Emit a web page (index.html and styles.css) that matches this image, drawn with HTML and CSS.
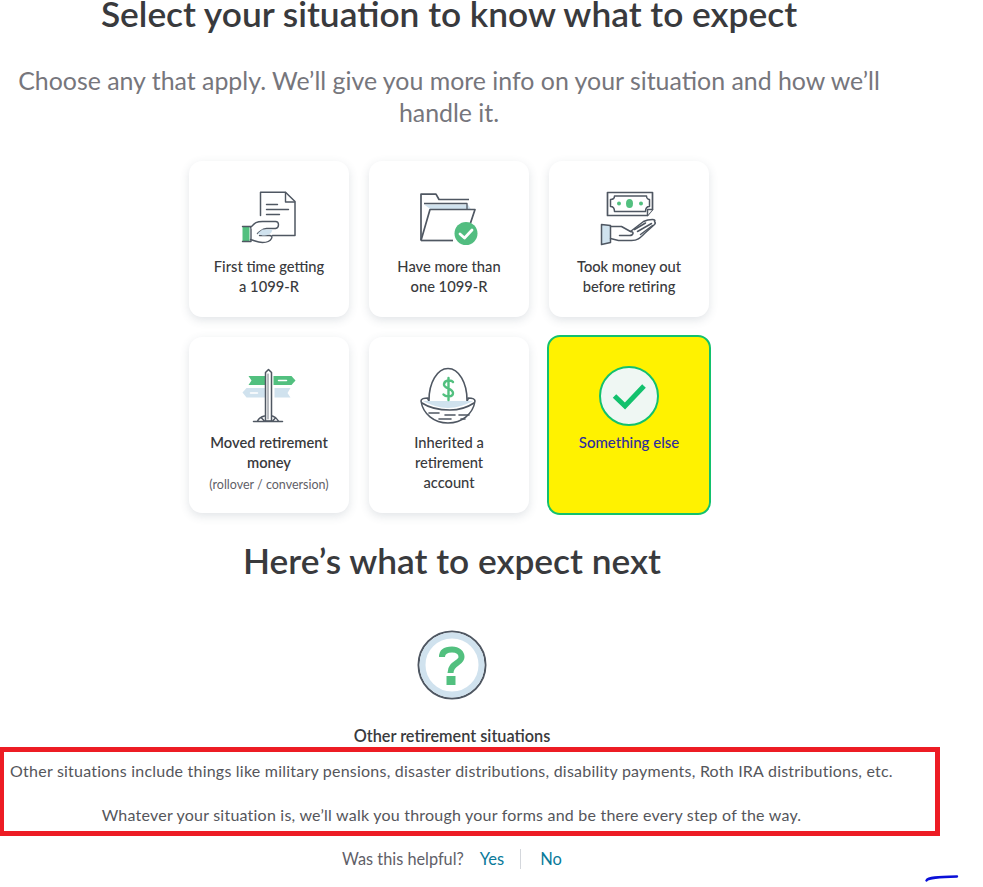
FILE: index.html
```html
<!DOCTYPE html>
<html lang="en">
<head>
<meta charset="utf-8">
<title>Select your situation</title>
<link rel="stylesheet" href="styles.css">
</head>
<body>
<main class="page">
  <section class="top">
    <h1 class="title">Select your situation to know what to expect</h1>
    <p class="subtitle">Choose any that apply. We’ll give you more info on your situation and how we’ll handle it.</p>
    <div class="grid">
      <div class="row row-one">
        <div class="card">
          <svg class="icon" viewBox="-3.500 -0.500 60 56" width="60" height="56" fill="none" stroke="#4f5762" stroke-width="1.4" stroke-linejoin="round" stroke-linecap="round">
            <path d="M18 24V0.700H43L52.500 10V44H30" stroke-width="1.500"/>
            <path d="M43 1V10.500H52"/>
            <path d="M24 13H35M24 18H46M24 23H37"/>
            <path d="M0 35H7V50H0z" fill="#52c07f" stroke="none"/>
            <path d="M0 35H8.500V50H0" />
            <path d="M8 36C12 32 13 30 20 30H33C37 30 37 36 33 37H24C20 37 18 40 15 42" fill="#fff"/>
            <path d="M8 48C12 49 15 51 20 51C25 51 28 49 29 47C30 45 29 44 27 44H17" fill="#fff"/>
            <path d="M20 38H30C29 42 26 44 20 44L15 42z" fill="#d0e2ee" stroke="none"/>
          </svg>
          <div class="label">First time getting<br>a 1099-R</div>
        </div>
        <div class="card">
          <svg class="icon" viewBox="0 -2.500 60 56" width="60" height="56" fill="none" stroke="#4f5762" stroke-width="1.7" stroke-linejoin="round">
            <path d="M2 47V0.700H17L20 6H50" />
            <path d="M5 11H49L52 16H12z" fill="#d0e2ee" stroke="none"/>
            <path d="M5 10H48V16" stroke-width="1.300"/>
            <path d="M2 47L11 16H56L51 31" />
            <path d="M2 47H34"/>
            <circle cx="47" cy="40" r="11.500" fill="#52bd80" stroke="none"/>
            <path d="M41 40.500L45.500 44.500L53 36.500" stroke="#fff" stroke-width="2.800" stroke-linecap="round"/>
          </svg>
          <div class="label">Have more than<br>one 1099-R</div>
        </div>
        <div class="card">
          <svg class="icon" viewBox="-2.500 -0.500 60 56" width="60" height="56" fill="none" stroke="#4f5762" stroke-width="1.5" stroke-linejoin="round" stroke-linecap="round">
            <path d="M46 24H6V1H51V18z" stroke-width="1.700"/>
            <path d="M46 24V18H51" fill="#fff"/>
            <path d="M13 4.500H45C45 7 47 8 48 8V15C45 15 44 17 44 20H13C13 17 12 15 9 15V8C12 8 13 7 13 4.500z"/>
            <ellipse cx="28" cy="12" rx="3.500" ry="4.500" fill="#52c07f" stroke="none"/>
            <circle cx="17.500" cy="12" r="2" fill="#52c07f" stroke="none"/>
            <circle cx="39.500" cy="12" r="2" fill="#52c07f" stroke="none"/>
            <path d="M0 33L9 34V51L0 53z" fill="#cfe2ee"/>
            <path d="M9 35L20 35L29 40L42 30C44 29 47 28 51 28C53 28 54 29 53 30C54 31 54 32 53 33L43 42C38 47 36 49 30 49H17L9 47"/>
            <path d="M18 44H28C32 44 33 40 29 40M33 38L44 31.500M36 40L50 32M39 43L51 34"/>
          </svg>
          <div class="label">Took money out<br>before retiring</div>
        </div>
      </div>
      <div class="row row-two">
        <div class="card">
          <svg class="icon" viewBox="-2.500 -2 60 56" width="60" height="56" fill="none" stroke="#4f5762" stroke-width="1.5" stroke-linejoin="round" stroke-linecap="round">
            <path d="M7 7H24V16H7L10 11.500z" fill="#52c07f" stroke="none"/>
            <path d="M32 7H50L54 11.500L50 16H32z" fill="#52c07f" stroke="none"/>
            <path d="M1 23.500L5 19H24V28.500H5z" fill="#d0e2ee" stroke="none"/>
            <path d="M33 19H49L46 24L49 28.500H33z" fill="#d0e2ee" stroke="none"/>
            <path d="M37 11.500H45M9 24H16" stroke="#fff"/>
            <path d="M24 52V3.500L27 0.500L30 3.500V52z" fill="#fff"/>
            <path d="M26.500 5V50" stroke-width="0.800"/>
            <path d="M12 52.500H41M16 52C17 50 19 48 23 47M37 52C36 50 34 48 31 47M20 49L23 52M34 49L31 52"/>
          </svg>
          <div class="label label-move">Moved retirement<br>money</div>
          <div class="sublabel">(rollover / conversion)</div>
        </div>
        <div class="card">
          <svg class="icon icon-egg" viewBox="0 0 60 56" width="60" height="58" fill="none" stroke="#4f5762" stroke-width="1.6" stroke-linejoin="round" stroke-linecap="round">
            <path d="M10 32C10 15 18 0.500 29 0.500C40 0.500 48 15 48 32"/>
            <path d="M9 30C5 30 2 31 2 33C4 46 15 55 29 55C43 55 54 46 56 33C56 31 53 30 49 30C50 34 42 37 29 37C16 37 8 34 9 30z" fill="#fff"/>
            <path d="M4 33C12 37 20 40 29 40C38 40 46 37 54 33" fill="#d0e2ee" stroke="none"/>
            <path d="M3 35C12 41 22 42 31 42C41 42 49 39 55 35M10 45H20M26 47H36M40 47H50M20 51H32M42 51H46"/>
            <path d="M34 14C32.500 12 26 11.500 25 16C24 20.500 34 20 34 25C34 29.500 26.500 29 24.500 26.500M29.500 10V32" stroke="#52c07f" stroke-width="2.400"/>
          </svg>
          <div class="label label-egg">Inherited a<br>retirement<br>account</div>
        </div>
        <div class="card card-selected">
          <svg class="check" viewBox="0 0 60 60" width="60" height="60" fill="none">
            <circle cx="30" cy="30" r="29" fill="#eff7f3" stroke="#12c16d" stroke-width="2"/>
            <path d="M15.500 30L26 40L45 20" stroke="#12c16d" stroke-width="5"/>
          </svg>
          <div class="label label-selected">Something else</div>
        </div>
      </div>
    </div>
  </section>
  <section class="bottom">
    <h2 class="next">Here’s what to expect next</h2>
    <svg class="help" viewBox="0 0 70 70" width="70" height="70" fill="none">
      <circle cx="35" cy="35" r="33.500" fill="#fff" stroke="#4f5762" stroke-width="2"/>
      <circle cx="35" cy="35" r="29.500" stroke="#d0e2ee" stroke-width="6"/>
      <path d="M25 27C25 21 30 19.500 35 19.500C41 19.500 44.500 23 44.500 27C44.500 33.500 33.500 33 33.500 43" stroke="#52c07f" stroke-width="6"/>
      <path d="M29.500 46H38.500V55H29.500z" fill="#52c07f"/>
    </svg>
    <h3 class="other">Other retirement situations</h3>
    <div class="callout">
      <p class="para">Other situations include things like military pensions, disaster distributions, disability payments, Roth IRA distributions, etc.</p>
      <p class="para para-last">Whatever your situation is, we’ll walk you through your forms and be there every step of the way.</p>
    </div>
    <div class="feedback">
      <span class="ask">Was this helpful?</span>
      <span class="answer answer-yes">Yes</span>
      <span class="answer answer-no">No</span>
    </div>
  </section>
  <svg class="scribble" viewBox="0 0 34 8" width="34" height="8" fill="none">
    <path d="M1.500 6.500C3 3.500 12 3 32 2.500" stroke="#0a10d8" stroke-width="2.400" stroke-linecap="round"/>
  </svg>
</main>
</body>
</html>
```
FILE: styles.css
```css
* {
  box-sizing: border-box;
}

html,
body {
  margin: 0;
  padding: 0;
  background: #fff;
}

body {
  font-family: "Lato", "Open Sans", sans-serif;
  color: #393a3d;
}

.page {
  position: relative;
  width: 983px;
  height: 887px;
  overflow: hidden;
}

.top {
  width: 898px;
  display: flex;
  flex-direction: column;
  align-items: center;
  text-align: center;
}

.title {
  margin: 0;
  font-size: 35.300px;
  line-height: 28px;
  font-weight: 600;
  color: #393a3d;
}

.subtitle {
  margin: 36px 0 0;
  width: 880px;
  font-size: 24.900px;
  line-height: 32px;
  font-weight: 400;
  color: #76767c;
}

.grid {
  margin-top: 33px;
  display: flex;
  flex-direction: column;
  gap: 20px;
}

.row {
  display: flex;
  gap: 20px;
}

.row-one .card {
  height: 156px;
}

.row-two .card {
  height: 176px;
}

.card {
  width: 160px;
  padding-top: 30px;
  background: #fff;
  border-radius: 13px;
  box-shadow: 0 3px 10px rgba(70, 85, 105, 0.16);
  display: flex;
  flex-direction: column;
  align-items: center;
  text-align: center;
}

.row-two .card-selected {
  margin: -2px;
  width: 164px;
  height: 180px;
  padding-top: 29px;
  background: #fff200;
  border: 2px solid #12c16d;
  box-shadow: none;
}

.icon {
  display: block;
  flex: none;
}

.check {
  display: block;
  flex: none;
}

.label {
  margin-top: 9px;
  font-size: 14.700px;
  line-height: 20px;
  font-weight: 500;
  color: #393a3d;
}

.label-move {
  font-weight: 600;
}

.label-egg {
  margin-top: 7px;
}

.label-selected {
  margin-top: 6px;
  font-size: 15px;
  color: #2d2d9e;
}

.sublabel {
  margin-top: 5px;
  font-size: 12.500px;
  line-height: 16px;
  color: #5f6068;
}

.bottom {
  width: 904px;
  margin-top: 24px;
  display: flex;
  flex-direction: column;
  align-items: center;
  text-align: center;
}

.next {
  margin: 0;
  font-size: 35.300px;
  line-height: 48px;
  font-weight: 600;
  color: #393a3d;
}

.help {
  display: block;
  margin-top: 45px;
}

.other {
  margin: 26px 0 0;
  font-size: 16.300px;
  line-height: 20px;
  font-weight: 600;
  color: #393a3d;
}

.callout {
  align-self: flex-start;
  width: 940px;
  height: 89px;
  margin-top: 1px;
  padding: 7px 41px 0 5px;
  border: 5px solid #ed1c24;
  border-left-width: 4px;
  font-size: 16px;
  letter-spacing: 0.220px;
  line-height: 24px;
  color: #55565b;
}

.para {
  margin: 0;
}

.para-last {
  margin-top: 20px;
}

.feedback {
  margin-top: 13px;
  display: flex;
  align-items: center;
  font-size: 16.300px;
  line-height: 20px;
}

.ask {
  color: #5f6068;
}

.answer {
  color: #0a7a9a;
  font-size: 16.500px;
}

.answer-yes {
  padding: 0 16px;
  border-right: 1px solid #d4d7dc;
}

.answer-no {
  padding-left: 19px;
}

.scribble {
  position: absolute;
  left: 925px;
  top: 874px;
}
```
